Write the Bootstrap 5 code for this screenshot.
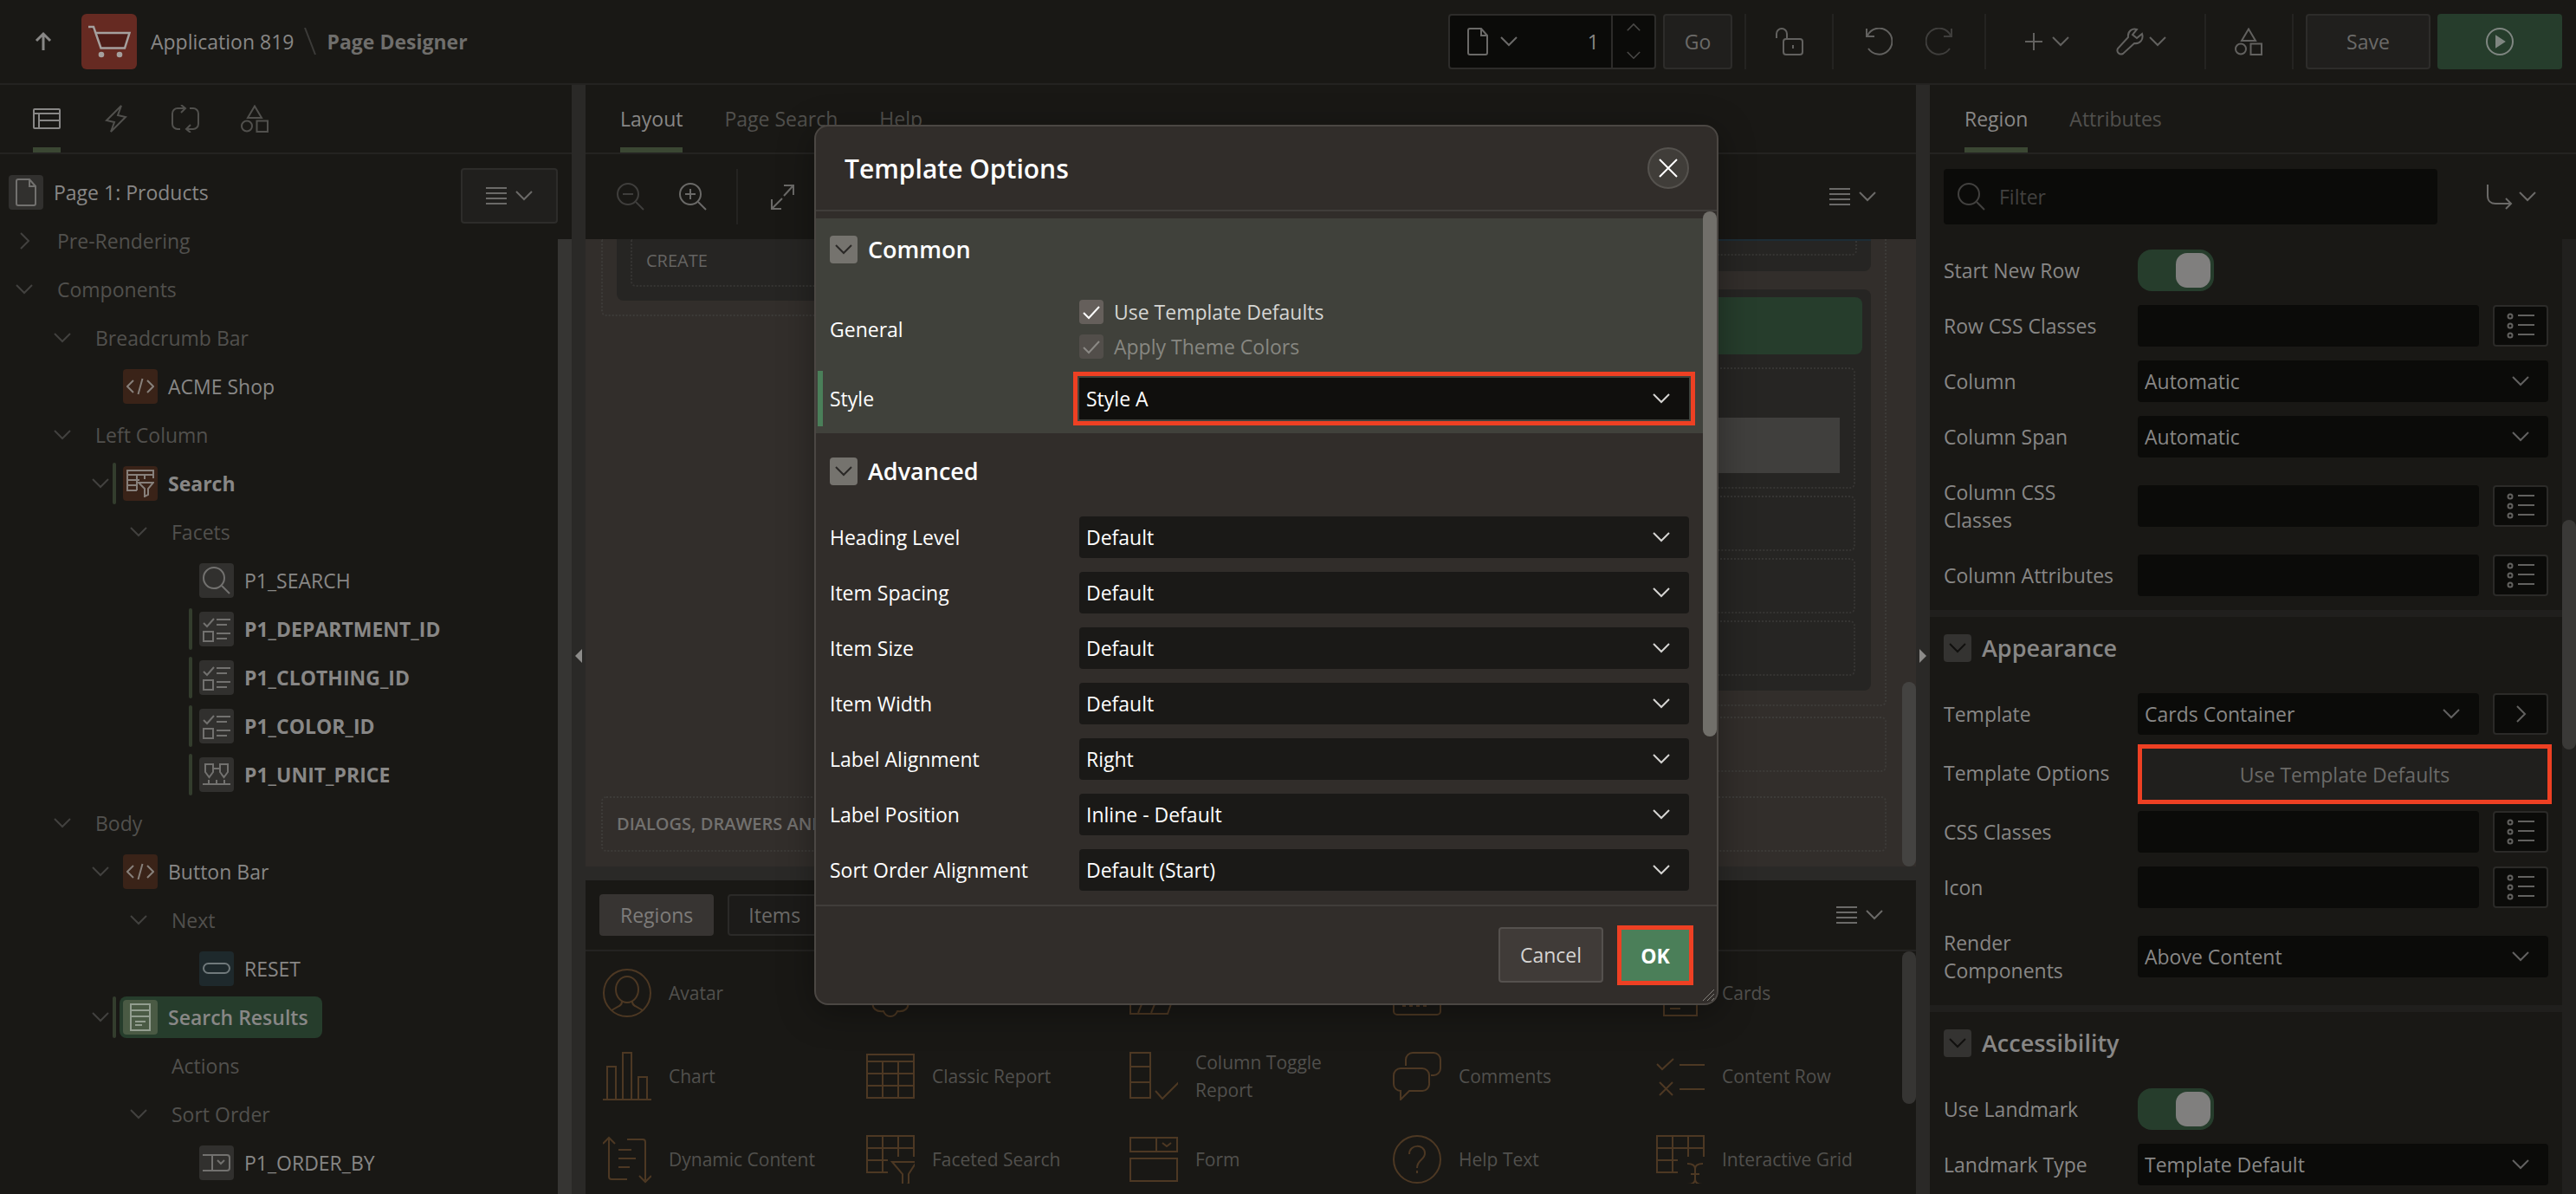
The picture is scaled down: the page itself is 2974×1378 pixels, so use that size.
<!DOCTYPE html>
<html lang="en">
<head>
<meta charset="utf-8">
<meta name="viewport" content="width=device-width, initial-scale=1">
<title>Page Designer</title>
<link href="https://cdn.jsdelivr.net/npm/bootstrap@5.3.0/dist/css/bootstrap.min.css" rel="stylesheet">
<style>
:root{--pane:#191815;--line:#242321;--split:#2a2927;--bright:#888786;--soft:#6b6a68;--dim:#51504d;--field:#0b0b09;--green:#263d2c;--brown:#4d3823;--hot:#ee4023}
body{background:var(--pane);color:var(--bright);font-family:"Open Sans","Noto Sans",sans-serif;font-size:23px;font-weight:500;line-height:32px;overflow:hidden}
button,input,select{font-weight:inherit}
svg{fill:none;stroke:currentColor;stroke-width:2;display:block;flex:none}
.i32{width:32px;height:32px}.i24{width:24px;height:24px}.i56{width:56px;height:56px}
.chev{width:20px;height:20px}
a{color:inherit;text-decoration:none}
.plain{background:none;border:0;padding:0;color:inherit;display:flex;align-items:center;gap:10px}
/* top bar */
.topbar{height:98px;border-bottom:2px solid var(--line);padding:0 16px 0 34px}
.crumbs{gap:12px;margin-left:16px}
.crumbs svg{color:#3c3b39}
.crumb-here{color:#6f6e6c;font-weight:700}
.logo-box{width:64px;height:64px;border-radius:6px;background:#662a22;color:#a5a09e;margin-left:28px}
.tools{color:#62615f}
.tool-btn{background:#201f1d;border:2px solid #2d2c2a;border-radius:4px;color:var(--soft);height:64px}
.go-btn{width:80px;padding:0}
.wide-btn{width:144px}
.page-field{width:240px;height:64px;background:var(--field);border:2px solid #2d2c2a;border-radius:4px;color:var(--soft)}
.page-field input{background:none;border:0;color:var(--bright);text-align:right;width:100px;padding:0 14px 0 0;margin-left:auto;outline:0}
.spin{width:50px;border-left:2px solid #2d2c2a;color:#4a4947;padding:6px 0}
.spin svg{width:16px;height:16px}
.run-btn{width:144px;height:64px;background:var(--green);border:0;border-radius:4px;color:#7f8681}
.vsep{width:2px;height:64px;background:var(--line)}
.faint{color:#3f3e3c}
/* panes */
.work{height:calc(100vh - 98px)}
.pane-left{width:660px}.pane-right{width:746px}
.tabbar{height:80px;border-bottom:2px solid var(--line);color:var(--dim);gap:48px}
.tabbar button{height:78px;border-bottom:6px solid transparent;border-top:6px solid transparent}
.tabbar button.active{color:var(--bright);border-bottom-color:#3b4733}
.splitter{width:16px;background:var(--split);color:#8c8b89;padding-top:38px}
.hsplit{height:16px;background:var(--split)}
.strip{height:98px;padding:0 46px 0 36px;color:var(--soft)}
/* tree */
.tree-row{height:56px;color:var(--dim)}
.twisty{width:20px;height:20px;margin-left:18px;color:#42413f}
.mark-bar{width:4px;height:48px;border-radius:2px;margin:0 4px}
.mark-bar.on{background:#333d2d}
.node{height:48px;padding:4px 16px 4px 4px;border-radius:8px;display:flex;align-items:center;gap:12px;color:var(--bright)}
.node-plain{padding-left:16px}
.node-root{padding-left:10px}
.tile{width:40px;height:40px;border-radius:4px;display:flex;align-items:center;justify-content:center;background:#31302e;color:#72716f}
.tile.rust{background:#3a2318;color:#87807b}.tile.teal{background:#1e292c;color:#70797b}
.node.sel{background:var(--green)}.node.sel .tile{background:#4a5a44;color:#929d8f}
.lv2{padding-left:44px}.lv3{padding-left:88px}.lv4{padding-left:132px}.lv5{padding-left:176px}
.fwb{font-weight:700}
.track{width:16px;background:#363533;margin-top:18px}
/* canvas */
.canvas-area{background:#322e2b;height:724px;color:#656462;font-size:20px}
.canvas-col{width:734px}
.dotted{border:2px dotted #3d3b38;border-radius:6px}
.well .dotted{border-color:#363533}
.open-top{border-top:0;border-top-left-radius:0;border-top-right-radius:0}
.well{background:#262523;border-radius:8px}
.well.open-top{border-radius:0 0 8px 8px}
.slot{margin:8px;height:64px}
.thumb{width:16px;border-radius:8px;background:#444341;flex:none}
.palette-item{width:304px;height:96px;padding:0 0 0 20px;color:var(--dim);font-size:21px;gap:20px}
.palette-item svg{color:var(--brown)}
.palette-bar{height:82px;border-bottom:2px solid var(--line);padding:0 38px 0 16px;gap:16px;color:var(--soft)}
.seg{height:48px;border-radius:4px;border:2px solid #2b2a28;background:#1c1b19;color:var(--soft);padding:0 22px}
.seg.active{background:#373432;border-color:#373432;color:#7e7c7a}
/* property editor */
.filter-box{width:570px;height:64px;background:var(--field);border-radius:4px;color:#42413f;padding:0 16px;gap:16px}
.filter-box input{background:none;border:0;outline:0;color:inherit;width:100%;padding:0}
.filter-box input::placeholder{color:#42413f;opacity:1}
.grp{padding:0 16px 8px;border-bottom:8px solid #201f1d}
.grp-head{padding:20px 0 28px;gap:12px;font-size:27px;font-weight:600;line-height:32px;margin:0}
.fold{width:32px;height:32px;border:0;padding:0;border-radius:4px;background:#343331;color:#11100e;display:flex;align-items:center;justify-content:center}
.prop{padding:8px 0;gap:16px}
.prop-name{width:208px;flex:none}
.prop-ctl{height:48px;border:0;border-radius:4px;background-color:var(--field);color:var(--bright);flex:1;min-width:0;padding:0 8px;font-size:23px;line-height:32px}
.pick{width:64px;height:48px;border:2px solid #2b2a28;border-radius:4px;background:var(--field);color:#62615f;padding:0;display:flex;align-items:center;justify-content:center}
select.prop-ctl{--c:url("data:image/svg+xml,%3Csvg xmlns='http://www.w3.org/2000/svg' width='20' height='20' fill='none' stroke='%23626160' stroke-width='2'%3E%3Cpath d='M1 5l9 9 9-9'/%3E%3C/svg%3E");appearance:none;background-image:var(--c);background-repeat:no-repeat;background-position:right 22px center;background-size:20px 20px}
.toggle{appearance:none;width:88px;height:48px;border-radius:16px;background:var(--green);padding:4px;margin:0;display:flex;justify-content:flex-end}
.toggle::before{content:"";width:40px;height:40px;border-radius:13px;background:#807f7e}
.opt-btn{height:69px;margin:-5px -4px -8px 0;flex:1;background:#201f1d;border:5px solid var(--hot);color:var(--soft);padding:0}
.prop-track{width:16px;background:#21201e;padding-top:324px}
/* dialog */
.tpl-dialog{position:absolute;left:940px;top:144px;width:1044px;height:1016px;background:#312d2a;border:2px solid #4b4743;border-radius:16px;color:#fff;box-shadow:0 8px 40px rgba(0,0,0,.35);z-index:5}
.dlg-head{height:98px;border-bottom:2px solid #403d3a;padding:0 32px 0 33px}
.dlg-title{font-size:30px;font-weight:600;line-height:40px;margin:2px 0 0}
.x-btn{width:48px;height:48px;border-radius:24px;background:#403d39;border:2px solid #55524e;color:#fff;padding:0;display:flex;align-items:center;justify-content:center}
.dlg-main{padding-top:8px}
.dgrp{padding:0 16px 8px;border-bottom:8px solid transparent;background-clip:padding-box}
.dgrp.tint{background-color:#40413b}
.dgrp .fold{background:#75736e;color:#2a2826}
.dgrp .prop-name{width:272px}
.dgrp .prop-ctl{color:#fff;background-color:#1a1917;--c:url("data:image/svg+xml,%3Csvg xmlns='http://www.w3.org/2000/svg' width='20' height='20' fill='none' stroke='%23d5d4d2' stroke-width='2'%3E%3Cpath d='M1 5l9 9 9-9'/%3E%3C/svg%3E")}
.dgrp .prop-ctl.hot{background-color:#100f0d;border-radius:0;outline:5px solid var(--hot);outline-offset:2px}
.changed{box-shadow:inset 6px 0 #4a7f59;margin-left:-14px;padding-left:14px}
.opt{height:40px;gap:12px;color:#d6d6d3}
.opt.off{color:#878781}
.tick{appearance:none;width:28px;height:28px;margin:0;border-radius:4px;background:#655f5b url("data:image/svg+xml,%3Csvg xmlns='http://www.w3.org/2000/svg' width='28' height='28' fill='none' stroke='%23fff' stroke-width='2'%3E%3Cpath d='M5 15l6 6L23 8'/%3E%3C/svg%3E")}
.tick:disabled{background:#524e4a url("data:image/svg+xml,%3Csvg xmlns='http://www.w3.org/2000/svg' width='28' height='28' fill='none' stroke='%238b8985' stroke-width='2'%3E%3Cpath d='M5 15l6 6L23 8'/%3E%3C/svg%3E")}
.dlg-thumb{width:16px;height:606px;border-radius:8px;background:#716f6a}
.dlg-foot{height:114px;border-top:2px solid #403d3a;padding:22px 27px 0 0;gap:16px}
.cancel-btn{width:121px;height:64px;margin-top:2px;background:#403b38;border:2px solid #55514e;border-radius:4px;color:#d5d4d2;padding:0}
.ok-btn{width:88px;height:69px;background:#4b7f59;border:5px solid var(--hot);color:#fff;font-weight:700;padding:0}
.grip{position:absolute;right:2px;bottom:2px;width:16px;height:16px;color:#85827d}
</style>
<script src="https://cdn.jsdelivr.net/npm/bootstrap@5.3.0/dist/js/bootstrap.bundle.min.js"></script>
</head>
<body class="vh-100">
<svg class="d-none" aria-hidden="true">
<symbol id="dn" viewBox="0 0 20 20"><path d="M1 5l9 9 9-9"/></symbol>
<symbol id="up" viewBox="0 0 20 20"><path d="M1 14l9-9 9 9"/></symbol>
<symbol id="rt" viewBox="0 0 20 20"><path d="M6 1l9 9-9 9"/></symbol>
<symbol id="menu" viewBox="0 0 24 24"><path d="M0 3h24M0 9h24M0 15h24M0 21h24"/></symbol>
<symbol id="page" viewBox="0 0 32 32"><path d="M7 1h13l7 8v20a2 2 0 0 1-2 2H7a2 2 0 0 1-2-2V3a2 2 0 0 1 2-2zM20 1v8h7"/></symbol>
<symbol id="find" viewBox="0 0 32 32"><circle cx="13" cy="13" r="12"/><path d="M22 22l9 9"/></symbol>
<symbol id="shapes" viewBox="0 0 32 32"><path d="M16 1.500l8 13.500H8z"/><circle cx="7" cy="24.500" r="6"/><path d="M18.500 18.500H31V31H18.500z"/></symbol>
<symbol id="code" viewBox="0 0 32 32"><path d="M8 9l-7 7 7 7M24 9l7 7-7 7M18.500 7l-5 18"/></symbol>
<symbol id="checks" viewBox="0 0 32 32"><path d="M1 9l4 4 8-9M1 19h11v11H1zM16 5h16M16 11h12M16 21h16M16 27h12"/></symbol>
<symbol id="rows" viewBox="0 0 32 32"><circle cx="4" cy="5" r="2.500"/><circle cx="4" cy="16" r="2.500"/><circle cx="4" cy="27" r="2.500"/><path d="M13 4h19M13 15h19M13 26h19"/></symbol>
</svg>

<header class="topbar d-flex align-items-center">
  <button class="plain" aria-label="Up"><svg class="i32" viewBox="0 0 32 32"><path stroke-width="3" d="M16 26V7M8 15l8-8 8 8"/></svg></button>
  <div class="logo-box"><svg width="64" height="64" viewBox="0 0 64 64"><path fill="#4d1d18" d="M8 15h7l8 24.500h27.500L55.500 22H17" stroke="none"/><path stroke-width="2.500" d="M8 15h6l8.500 24.500H50L55.500 22H17"/><circle cx="23" cy="47" r="3.300" fill="currentColor" stroke="none"/><circle cx="44" cy="47" r="3.300" fill="currentColor" stroke="none"/></svg></div>
  <nav class="crumbs d-flex align-items-center">
    <a href="#">Application 819</a>
    <svg width="14" height="32" viewBox="0 0 14 32"><path d="M1 0l12 31"/></svg>
    <a href="#" class="crumb-here">Page Designer</a>
  </nav>
  <div class="tools d-flex align-items-center ms-auto">
    <div class="page-field d-flex align-items-center">
      <button class="plain ps-3" aria-label="Page finder"><svg class="i32" viewBox="0 0 32 32"><use href="#page"/></svg><svg class="chev"><use href="#dn"/></svg></button>
      <input aria-label="Page" value="1">
      <div class="spin d-flex flex-column align-items-center justify-content-between h-100"><svg><use href="#up"/></svg><svg><use href="#dn"/></svg></div>
    </div>
    <button class="tool-btn go-btn ms-2">Go</button>
    <div class="vsep" style="margin:0 34px 0 14px"></div>
    <button class="plain" aria-label="Unlock"><svg class="i32" viewBox="0 0 32 32"><rect x="9" y="13" width="22" height="18" rx="3"/><path d="M1 12V7a6 6 0 0 1 12 0v6M20 20v4"/></svg></button>
    <div class="vsep" style="margin:0 36px 0 33px"></div>
    <button class="plain" aria-label="Undo"><svg class="i32" viewBox="0 0 32 32"><path d="M2 1v9h9M3 9a15 15 0 1 1 1 15"/></svg></button>
    <button class="plain faint" style="margin-left:38px" aria-label="Redo"><svg class="i32" viewBox="0 0 32 32"><path d="M30 1v9h-9M29 9a15 15 0 1 0-1 15"/></svg></button>
    <div class="vsep" style="margin:0 44px 0 36px"></div>
    <button class="plain" aria-label="Create"><svg width="22" height="22" viewBox="0 0 22 22"><path d="M11 1v20M1 11h20"/></svg><svg class="chev"><use href="#dn"/></svg></button>
    <button class="plain" style="margin-left:54px;gap:6px" aria-label="Utilities"><svg class="i32" viewBox="0 0 32 32"><path d="M30 7l-6 5-5-4 5-6c-5-2-11 2-10 9L2 24c-2 4 2 8 6 6l13-12c7 1 11-5 9-11zM6 26h.1"/></svg><svg class="chev"><use href="#dn"/></svg></button>
    <div class="vsep" style="margin:0 33px 0 44px"></div>
    <button class="plain" aria-label="Shared components"><svg class="i32"><use href="#shapes"/></svg></button>
    <div class="vsep" style="margin:0 14px 0 34px"></div>
    <button class="tool-btn wide-btn">Save</button>
    <button class="run-btn ms-2 d-flex align-items-center justify-content-center" aria-label="Run page"><svg class="i32" viewBox="0 0 32 32"><circle cx="16" cy="16" r="15"/><path fill="currentColor" d="M12 10v12l9-6z"/></svg></button>
  </div>
</header>

<main class="work d-flex">
  <section class="pane-left d-flex flex-column flex-shrink-0">
    <div class="tabbar d-flex" style="padding-left:38px">
      <button class="plain active" aria-label="Rendering"><svg class="i32" viewBox="0 0 32 32"><rect x="1" y="5" width="30" height="22" rx="1"/><path d="M1 10h30M7 10v17M7 18h24"/></svg></button>
      <button class="plain" aria-label="Dynamic actions"><svg class="i32" viewBox="0 0 32 32"><path d="M22 1L5 18l9 2-4 11 17-17-9-2z"/></svg></button>
      <button class="plain" aria-label="Processing"><svg class="i32" viewBox="0 0 32 32"><path d="M10 28H7a6 6 0 0 1-6-6V10a6 6 0 0 1 6-6h9M11 0l5 4-5 5M21 4h4a6 6 0 0 1 6 6v12a6 6 0 0 1-6 6h-8M22 23l-5 5 5 4"/></svg></button>
      <button class="plain" aria-label="Shared components"><svg class="i32"><use href="#shapes"/></svg></button>
    </div>
    <div class="d-flex flex-fill pt-3 overflow-hidden">
      <div class="flex-fill">
        <div class="tree-row d-flex align-items-center"><div class="node node-root"><span class="tile"><svg class="i32"><use href="#page"/></svg></span>Page 1: Products</div></div>
        <div id="tree"></div>
      </div>
      <div class="d-flex flex-column align-items-end">
        <button class="tool-btn d-flex align-items-center justify-content-center me-3 flex-shrink-0" style="width:112px;gap:10px" aria-label="Menu"><svg class="i24"><use href="#menu"/></svg><svg class="chev"><use href="#dn"/></svg></button>
        <div class="track flex-fill"></div>
      </div>
    </div>
  </section>

  <div class="splitter d-flex align-items-center justify-content-center flex-shrink-0"><svg width="8" height="16" viewBox="0 0 8 16"><path d="M8 0v16L0 8z" fill="currentColor" stroke="none"/></svg></div>

  <section class="flex-fill d-flex flex-column" style="min-width:0">
    <div class="tabbar d-flex flex-shrink-0" style="padding-left:40px">
      <button class="plain active">Layout</button><button class="plain">Page Search</button><button class="plain">Help</button>
    </div>
    <div class="strip d-flex align-items-center flex-shrink-0">
      <button class="plain faint" aria-label="Zoom out"><svg class="i32"><use href="#find"/><path d="M7 13h12"/></svg></button>
      <button class="plain" style="margin-left:40px" aria-label="Zoom in"><svg class="i32"><use href="#find"/><path d="M7 13h12M13 7v12"/></svg></button>
      <div class="vsep" style="margin:0 36px 0 34px"></div>
      <button class="plain" aria-label="Expand"><svg class="i32" viewBox="0 0 32 32"><path d="M17 3h11v11M28 3L17 15M14 30H3V19M3 30l12-12"/></svg></button>
      <button class="plain ms-auto" aria-label="Menu"><svg class="i24"><use href="#menu"/></svg><svg class="chev"><use href="#dn"/></svg></button>
    </div>
    <div class="canvas-area d-flex flex-shrink-0">
      <div class="flex-fill" style="padding:0 18px">
        <div class="d-flex align-items-start justify-content-between">
          <div class="canvas-col dotted open-top px-3 pb-3"><div class="well open-top px-3 pb-3"><div class="dotted open-top px-3" style="padding:9px 0 12px">CREATE</div></div></div>
          <div class="canvas-col">
            <div class="dotted open-top px-3 pb-3">
              <div class="well open-top px-3 pb-3" style="height:37px;border-top:2px solid #1d2c35"><div class="dotted open-top" style="height:17px"></div></div>
              <div class="well" style="margin-top:21px;padding:9px 10px 17px">
                <div class="rounded-3" style="height:66px;background:var(--green)"></div>
                <div class="dotted" style="margin:15px 8px 8px;height:140px;padding:56px 16px 0"><div style="height:64px;background:#403f3d"></div></div>
                <div class="dotted slot"></div><div class="dotted slot"></div><div class="dotted slot mb-0"></div>
              </div>
            </div>
            <div class="dotted" style="margin-top:12px;height:64px"></div>
          </div>
        </div>
        <div class="dotted fw-semibold d-flex align-items-center px-3" style="margin-top:28px;height:64px;color:#72716f">DIALOGS, DRAWERS AND</div>
      </div>
      <div class="thumb align-self-end" style="height:213px"></div>
    </div>
    <div class="hsplit flex-shrink-0"></div>
    <div class="palette-bar d-flex align-items-center flex-shrink-0">
      <button class="seg active">Regions</button><button class="seg">Items</button><button class="plain ms-auto" aria-label="Menu"><svg class="i24"><use href="#menu"/></svg><svg class="chev"><use href="#dn"/></svg></button>
    </div>
    <div class="d-flex flex-fill overflow-hidden">
      <div class="d-flex flex-wrap flex-fill align-content-start" id="palette"></div>
      <div class="thumb" style="height:176px;background:#363533"></div>
    </div>
  </section>

  <div class="splitter d-flex align-items-center justify-content-center flex-shrink-0"><svg width="8" height="16" viewBox="0 0 8 16"><path d="M0 0v16l8-8z" fill="currentColor" stroke="none"/></svg></div>

  <section class="pane-right d-flex flex-column flex-shrink-0">
    <div class="tabbar d-flex flex-shrink-0" style="padding-left:40px"><button class="plain active">Region</button><button class="plain">Attributes</button></div>
    <div class="strip d-flex align-items-center flex-shrink-0 ps-3">
      <label class="filter-box d-flex align-items-center"><svg class="i32"><use href="#find"/></svg><input placeholder="Filter" aria-label="Filter"></label>
      <button class="plain ms-auto" style="gap:6px" aria-label="Go to group"><svg class="i32" viewBox="0 0 32 32"><path d="M2 2v13c0 6 4 9 9 9h18M23 18l6 6-6 6"/></svg><svg class="chev"><use href="#dn"/></svg></button>
    </div>
    <div class="d-flex flex-fill overflow-hidden">
      <div class="flex-fill" id="props"></div>
      <div class="prop-track"><div class="thumb" style="height:265px;background:#3a3937"></div></div>
    </div>
  </section>
</main>

<div class="tpl-dialog d-flex flex-column" role="dialog" aria-label="Template Options">
  <div class="dlg-head d-flex align-items-center justify-content-between flex-shrink-0"><h2 class="dlg-title">Template Options</h2><button class="x-btn" aria-label="Close"><svg width="22" height="22" viewBox="0 0 22 22"><path d="M1 1l20 20M21 1L1 21"/></svg></button></div>
  <div class="d-flex flex-fill overflow-hidden">
    <div class="dlg-main flex-fill">
      <div class="dgrp tint">
        <h3 class="grp-head d-flex"><button class="fold" aria-label="Collapse"><svg class="chev"><use href="#dn"/></svg></button>Common</h3>
        <div class="prop d-flex align-items-center"><span class="prop-name">General</span><div>
          <div class="opt d-flex align-items-center"><input type="checkbox" class="tick" id="o1" checked><label for="o1">Use Template Defaults</label></div>
          <div class="opt off d-flex align-items-center"><input type="checkbox" class="tick" id="o2" checked disabled><label for="o2">Apply Theme Colors</label></div></div></div>
        <div class="prop changed d-flex align-items-center"><label class="prop-name" for="sty">Style</label><select id="sty" class="prop-ctl hot"><option>Style A</option></select></div>
      </div>
      <div class="dgrp" id="adv"><h3 class="grp-head d-flex"><button class="fold" aria-label="Collapse"><svg class="chev"><use href="#dn"/></svg></button>Advanced</h3></div>
    </div>
    <div class="dlg-thumb"></div>
  </div>
  <div class="dlg-foot d-flex align-items-start justify-content-end flex-shrink-0"><button class="cancel-btn">Cancel</button><button class="ok-btn">OK</button></div>
  <svg class="grip" viewBox="0 0 16 16"><path stroke-width="1" d="M2 15L15 2M7 15l8-8M12 15l3-3"/></svg>
</div>

<script>
const use=(id,c)=>`<svg class="${c}"><use href="#${id}"/></svg>`;
const raw=(p,n)=>`<svg class="i${n}" viewBox="0 0 ${n} ${n}">${p}</svg>`;
const T={
 code:use('code','i32'),find:use('find','i32'),checks:use('checks','i32'),
 facet:raw('<path d="M12 24H1V1h30v9M1 6h30M1 12h14M1 18h11M12 6v18M21 6v5M14 15h17l-6 7v7l-4 2v-9z"/>',32),
 range:raw('<path d="M3 4h9v9l-4.500 6L3 13zM20 4h9v9l-4.500 6-4.500-6zM12 9h8M0 27h32M7 22v5M16 22v5M25 22v5"/>',32),
 pill:raw('<rect x="1" y="10" width="30" height="11" rx="5.500"/>',32),
 card:raw('<path d="M5 1h22v30H5zM5 8h22M5 15h22M10 21h12M10 25h8"/>',32),
 pick:raw('<path d="M0 7h28a3 3 0 0 1 3 3v12a3 3 0 0 1-3 3H0M11 7v18M17 13l4 4 4-4"/>',32)};
// level, twisty, label, icon, tile colour, flags (b bold, m marker, s selected)
const rows=[[1,'rt','Pre-Rendering'],[1,'dn','Components'],[2,'dn','Breadcrumb Bar'],[3,'','ACME Shop','code','rust',''],[2,'dn','Left Column'],[3,'dn','Search','facet','rust','bm'],[4,'dn','Facets'],[5,'','P1_SEARCH','find','',''],[5,'','P1_DEPARTMENT_ID','checks','','bm'],[5,'','P1_CLOTHING_ID','checks','','bm'],[5,'','P1_COLOR_ID','checks','','bm'],[5,'','P1_UNIT_PRICE','range','','bm'],[2,'dn','Body'],[3,'dn','Button Bar','code','rust',''],[4,'dn','Next'],[5,'','RESET','pill','teal',''],[3,'dn','Search Results','card','','sm'],[4,'','Actions'],[4,'dn','Sort Order'],[5,'','P1_ORDER_BY','pick','','']];
tree.innerHTML=rows.map(([l,t,n,i,c,f=''])=>`<div class="tree-row d-flex align-items-center lv${l}"><span class="twisty">${t?use(t,'chev'):''}</span><span class="mark-bar ${f.includes('m')?'on':''}"></span>${i?`<span class="node ${f.includes('b')?'fwb':''} ${f.includes('s')?'sel fw-semibold':''}"><span class="tile ${c}">${T[i]}</span>${n}</span>`:`<span class="node-plain">${n}</span>`}</div>`).join('');
const P=[
['Avatar','<circle cx="28" cy="28" r="27"/><ellipse cx="28" cy="24" rx="13" ry="15"/><path d="M22 38c0 3-1 4-3 5l-9 5M34 38c0 3 1 4 3 5l9 5"/>'],
['Badge','<path d="M20 3c4-3 12-3 16 3 8-1 14 5 12 12 8 4 8 16 0 20 2 8-4 12-12 11-3 8-13 8-16 0-8 1-14-3-12-11-8-4-8-16 0-20-2-8 4-13 12-12z"/>'],
['Breadcrumb','<path d="M1 18h55L44 52H1zM10 51l13-32M25 51l13-32"/>'],
['Calendar','<rect x="1" y="6" width="54" height="47" rx="4"/><path stroke-width="4" stroke-dasharray="4 4" d="M11 42h30"/>'],
['Cards','<path d="M9 1h38v53H9zM16 46h12"/>'],
['Chart','<path d="M0 55h56M5 55V17h10v38M23 55V1h10v54M41 55V29h10v26"/>'],
['Classic Report','<path d="M1 3h54v50H1zM1 11h54M1 25h54M1 39h54M19 11v42M37 11v42"/>'],
['Column Toggle Report','<path d="M1 1h23v52H1zM1 17h23M1 35h23M30 45l8 9 19-19"/>'],
['Comments','<path d="M15 16V9a8 8 0 0 1 8-8h24a8 8 0 0 1 8 8v10a8 8 0 0 1-8 8h-3M9 19h25a8 8 0 0 1 8 8v9a8 8 0 0 1-8 9H19L9 55V45a8 8 0 0 1-8-8V27a8 8 0 0 1 8-8z"/>'],
['Content Row','<path d="M1 14l6 6L20 8M27 15h29M4 35l15 15M19 35L4 50M27 43h29"/>'],
['Dynamic Content','<path d="M0 10l7-7 7 7M7 4v44a3 3 0 0 0 3 3h18M28 5h18a3 3 0 0 1 3 3v44M42 47l7 7 7-7M18 17h15M18 27h20M18 37h13"/>'],
['Faceted Search','<path d="M25 43H1V1h54v24M1 15h54M1 29h24M19 1v42M37 1v24M30 31h28l-9 14v11l-7 3V45z"/>'],
['Form','<path d="M1 3h54v16H1zM31 3v16M38 9l5 4 5-4M1 27h54v26H1z"/>'],
['Help Text','<circle cx="28" cy="28" r="27"/><path d="M19 22c0-12 18-12 18-1 0 8-9 7-9 17M28 41v3"/>'],
['Interactive Grid','<path d="M25 43H1V1h54v24M1 15h54M1 29h24M19 1v42M37 1v24M36 33c5 0 9 1 9 6v12c0 5-4 6-9 6M54 33c-5 0-9 1-9 6M45 51c0 5 4 6 9 6M40 45h10"/>']];
palette.innerHTML=P.map(([n,p])=>`<div class="palette-item d-flex align-items-center">${raw(p,56)}<span>${n.replace('Toggle Report','Toggle<br>Report')}</span></div>`).join('');
let k=0;
const row=(n,ctl)=>{const id='f'+(++k);return `<div class="prop d-flex align-items-center"><label class="prop-name" for="${id}">${n}</label>${ctl(id)}</div>`};
const sel=(n,v,x='')=>row(n,id=>`<select class="prop-ctl" id="${id}"><option>${v}</option></select>${x}`);
const txt=n=>row(n,id=>`<input class="prop-ctl" id="${id}"><button class="pick" aria-label="Pick value">${use('rows','i32')}</button>`);
const sw=n=>row(n,id=>`<input type="checkbox" role="switch" class="toggle" id="${id}" checked>`);
const head=n=>`<h3 class="grp-head d-flex"><button class="fold" aria-label="Collapse">${use('dn','chev')}</button>${n}</h3>`;
props.innerHTML=
`<div class="grp pt-1">${sw('Start New Row')+txt('Row CSS Classes')+sel('Column','Automatic')+sel('Column Span','Automatic')+txt('<span class="d-block py-2">Column CSS Classes</span>')+txt('Column Attributes')}</div>
<div class="grp">${head('Appearance')+sel('Template','Cards Container',`<button class="pick" aria-label="Edit">${use('rt','chev')}</button>`)+row('<span class="d-block py-1">Template Options</span>',id=>`<button class="opt-btn" id="${id}">Use Template Defaults</button>`)+txt('CSS Classes')+txt('Icon')+sel('<span class="d-block py-2">Render Components</span>','Above Content')}</div>
<div class="grp">${head('Accessibility')+sw('Use Landmark')+sel('Landmark Type','Template Default')}</div>`;
adv.insertAdjacentHTML('beforeend',[['Heading Level','Default'],['Item Spacing','Default'],['Item Size','Default'],['Item Width','Default'],['Label Alignment','Right'],['Label Position','Inline - Default'],['Sort Order Alignment','Default (Start)']].map(a=>sel(...a)).join(''));
</script>
</body>
</html>
